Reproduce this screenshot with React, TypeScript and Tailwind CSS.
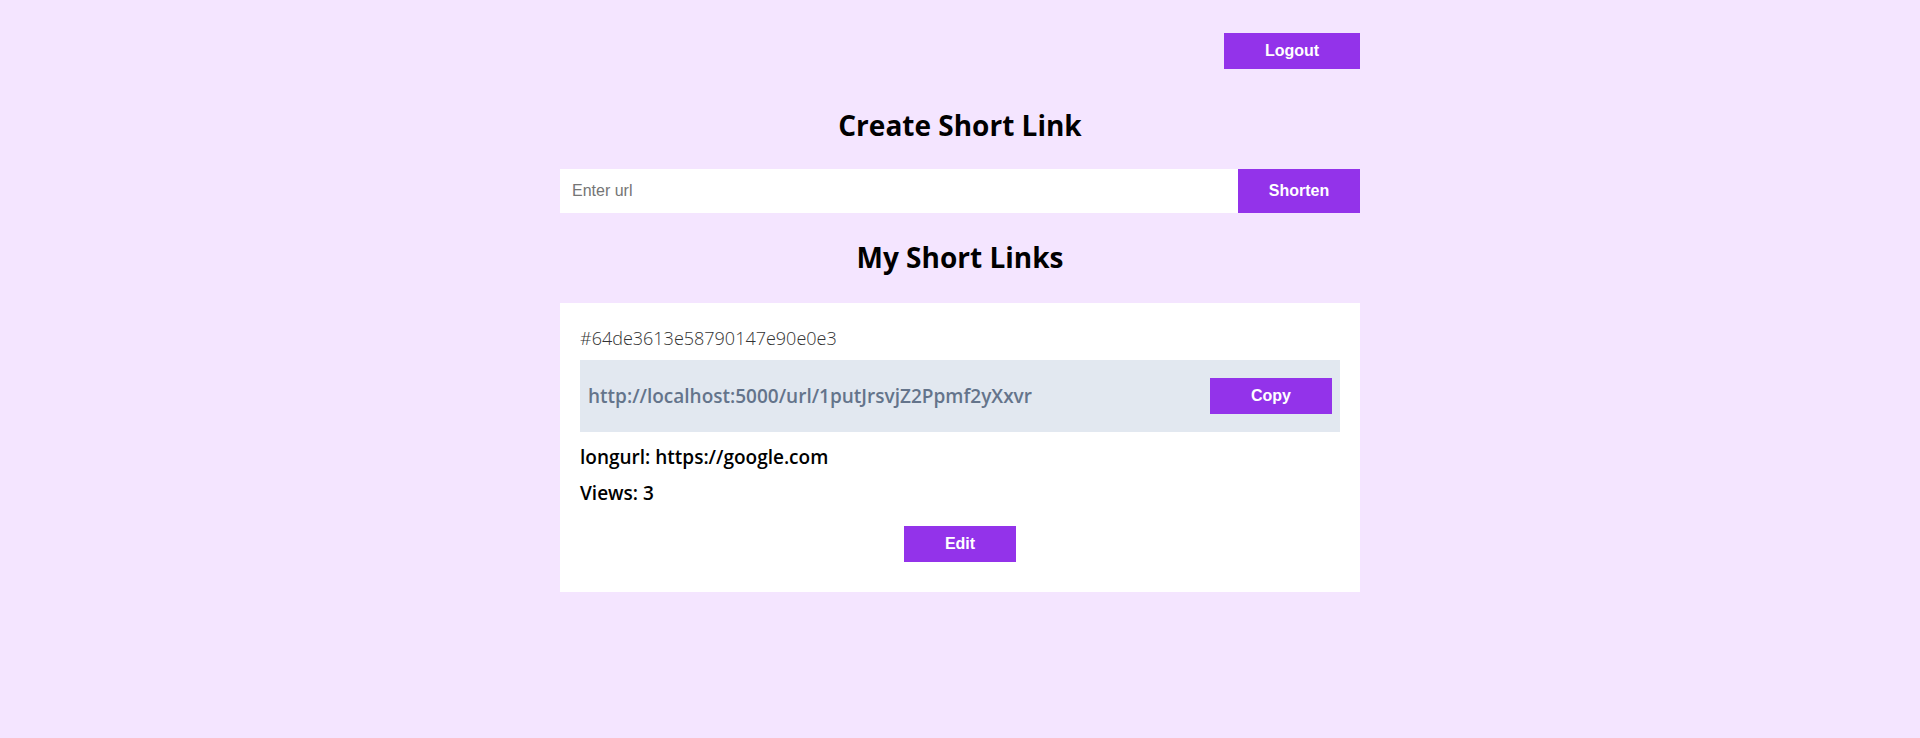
import React from 'react';

const btn =
  "bg-[#9333ea] font-['Liberation_Sans',Arial,sans-serif] text-base font-bold text-white";

function LinkCard() {
  return (
    <div className="mt-[28px] bg-white px-5 pt-[21px] pb-[30px]">
      <p className="text-lg font-light leading-7 text-[#333]">#64de3613e58790147e90e0e3</p>
      <div className="mt-2 flex h-[72px] items-center justify-between bg-[#e2e8f0] px-2">
        <span className="text-[19px] font-semibold text-[#64748b]">
          http://localhost:5000/url/1putJrsvjZ2Ppmf2yXxvr
        </span>
        <button className={`h-9 w-[122px] ${btn}`}>Copy</button>
      </div>
      <p className="mt-[11px] text-[19px] font-semibold leading-7 text-black">longurl: https://google.com</p>
      <p className="mt-2 text-[19px] font-semibold leading-7 text-black">Views: 3</p>
      <div className="mt-[19px] flex justify-center">
        <button className={`h-9 w-[112px] ${btn}`}>Edit</button>
      </div>
    </div>
  );
}

export default function App() {
  return (
    <div className="min-h-screen bg-[#f4e5ff] font-['Open_Sans',sans-serif]">
      <div className="mx-auto w-[800px] pt-[33px]">
        <div className="flex justify-end">
          <button className={`h-9 w-[136px] ${btn}`}>Logout</button>
        </div>

        <h2 className="mt-[38px] text-center text-[28px] font-bold leading-9 text-black">Create Short Link</h2>

        <form className="mt-[26px] flex h-11" onSubmit={(e) => e.preventDefault()}>
          <input
            type="text"
            placeholder="Enter url"
            className="h-full flex-1 bg-white px-3 font-['Liberation_Sans',Arial,sans-serif] text-base outline-none placeholder:text-[#757575]"
          />
          <button type="submit" className={`h-full w-[122px] ${btn}`}>
            Shorten
          </button>
        </form>

        <h2 className="mt-[26px] text-center text-[28px] font-bold leading-9 text-black">My Short Links</h2>

        <LinkCard />
      </div>
    </div>
  );
}
